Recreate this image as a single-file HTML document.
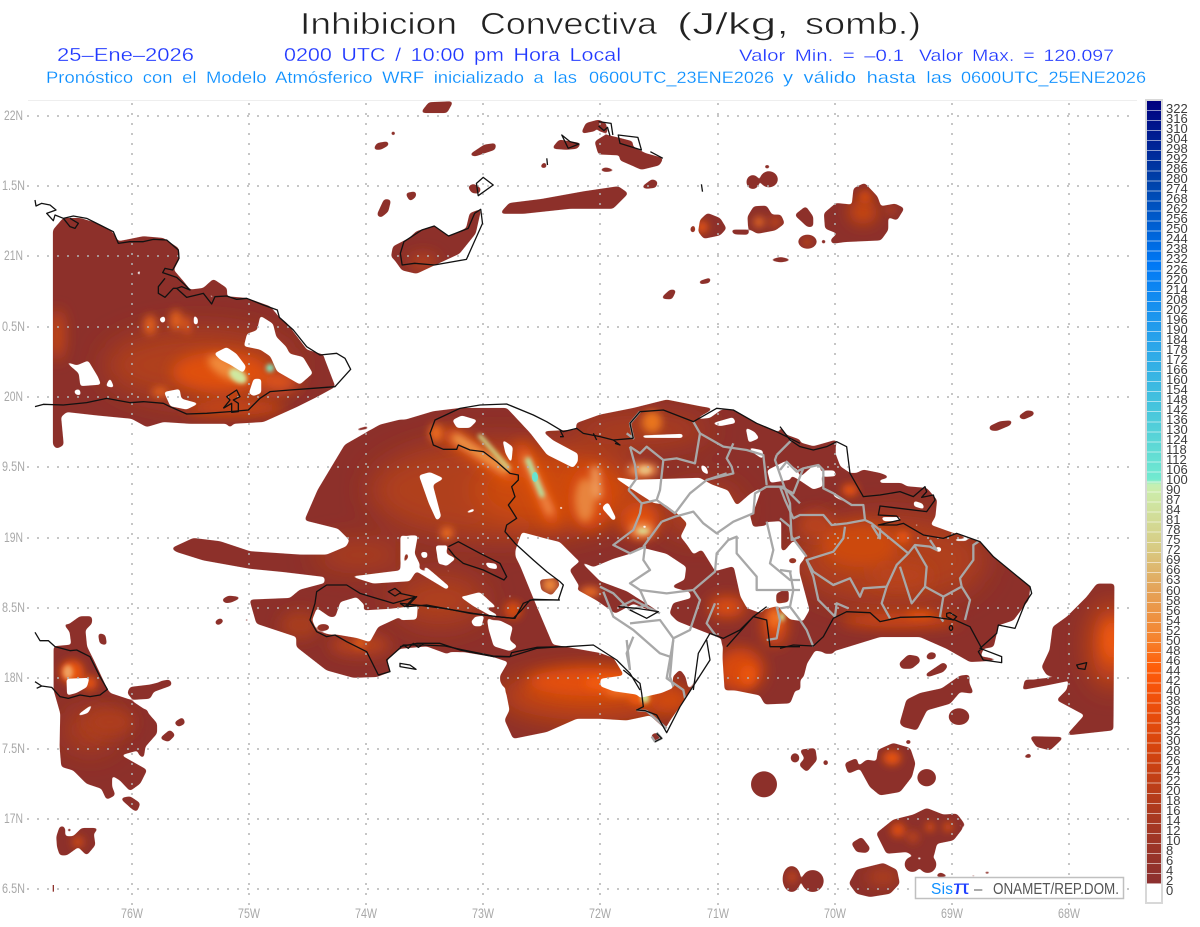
<!DOCTYPE html>
<html lang="es"><head><meta charset="utf-8"><title>Inhibicion Convectiva</title>
<style>
html,body{margin:0;padding:0;background:#fff;width:1200px;height:927px;overflow:hidden;font-family:"Liberation Sans",sans-serif}
svg{position:absolute;left:0;top:0}
.t{white-space:pre;font-family:"Liberation Sans",sans-serif}
.ax{font-size:13.5px;fill:#a8a8a8}
.ln path,.ln ellipse{fill:none;vector-effect:non-scaling-stroke;stroke-linejoin:round}
#bar{position:absolute;left:1145px;top:99px;width:18px;height:805px;box-sizing:border-box;border:2px solid #d8d8d8;background:#fff}
#cells{position:absolute;left:0;top:0;width:100%;height:783px;
background:repeating-linear-gradient(to bottom,transparent 0,transparent 9.04px,rgba(255,255,255,.55) 9.04px,rgba(255,255,255,.55) 10.04px),
linear-gradient(to bottom,#00007f 0%,#0042aa 10.4%,#0078f5 20.8%,#2aa5ea 31%,#45c4dd 39%,#72ead0 48.3%,#c4f0b4 49%,#ccecaa 49.8%,#d8cc84 57%,#e4a45a 62.3%,#f58530 68.5%,#ff5f0a 72.2%,#f8540a 74.5%,#d4440f 83%,#ab3a20 91%,#8c3030 100%)}
#lab{position:absolute;left:1166px;top:104px;font-size:13px;line-height:10.03px;color:#3c3c3c;white-space:pre}
</style></head><body>
<svg width="1200" height="927" viewBox="0 0 1200 927" xmlns="http://www.w3.org/2000/svg">
<defs>
<filter id="b2" x="-100%" y="-100%" width="300%" height="300%"><feGaussianBlur stdDeviation="2"/></filter>
<filter id="b4" x="-100%" y="-100%" width="300%" height="300%"><feGaussianBlur stdDeviation="4"/></filter>
<filter id="b7" x="-100%" y="-100%" width="300%" height="300%"><feGaussianBlur stdDeviation="7"/></filter>
<filter id="b14" x="-100%" y="-100%" width="300%" height="300%"><feGaussianBlur stdDeviation="14"/></filter>
<filter id="sm" filterUnits="userSpaceOnUse" x="0" y="0" width="1200" height="927" color-interpolation-filters="sRGB"><feGaussianBlur stdDeviation="1.7"/><feComponentTransfer><feFuncR type="linear" slope="8" intercept="-2.7"/><feFuncG type="linear" slope="8" intercept="-2.7"/><feFuncB type="linear" slope="8" intercept="-2.7"/></feComponentTransfer></filter>
<mask id="m" maskUnits="userSpaceOnUse" x="0" y="0" width="1200" height="927">
<g filter="url(#sm)">
<rect width="1200" height="927" fill="#000"/>
<g fill="#fff">
<g transform="translate(30 190) scale(.33333)"><polygon points="70,120 100,85 150,85 200,100 245,125 265,155 340,140 400,145 445,175 448,205 430,240 460,275 480,300 520,295 550,268 590,295 590,320 650,325 720,350 745,380 770,400 830,480 880,495 885,510 915,590 860,620 800,650 700,695 610,700 600,712 590,700 480,700 400,695 350,710 305,685 200,675 110,665 92,680 100,765 80,775 70,765"/><polygon points="975,718 1015,708 1015,715 985,722"/></g>
<polygon points="305,520 318,490 330,470 345,445 380,425 400,420 440,420 440,560 350,555 350,540 338,528"/>
<g transform="translate(160 520) scale(.33333)"><polygon points="35,85 100,55 180,65 270,95 420,105 500,105 560,80 570,60 535,25 435,0 1200,0 1200,570 1050,570 1040,520 1020,480 1060,430 1000,410 910,395 860,400 800,378 720,385 680,420 690,455 650,470 580,472 500,450 410,380 410,350 290,310 270,240 390,235 420,210 495,190 495,170 370,155 270,145 130,120 50,95"/></g>
<g transform="translate(400 390) scale(.33333)"><polygon points="0,95 100,65 180,55 320,55 390,130 440,195 520,235 535,215 535,190 460,150 430,125 530,120 530,100 600,75 700,55 800,30 900,50 960,60 1000,60 1070,100 1130,125 1200,150 1200,900 975,900 965,745 700,640 460,770 400,640 0,640"/></g>
<g transform="translate(780 390) scale(.33333)"><polygon points="0,110 30,150 100,170 170,150 165,175 210,250 230,250 250,240 300,250 340,265 380,290 440,295 470,330 465,380 450,405 520,430 600,455 650,510 750,590 755,600 745,630 700,690 655,705 640,770 610,775 600,800 665,810 570,815 500,775 420,740 300,740 170,780 130,785 105,780 80,820 70,860 40,885 0,900"/></g>
</g>
<g fill="#000">
<g transform="translate(30 190) scale(.33333)">
<polygon points="690,375 730,400 740,440 770,470 780,490 820,500 850,550 810,585 740,545 720,500 690,480 640,470 650,430 680,420"/>
<polygon points="550,490 590,470 620,490 650,530 640,550 600,525 570,510"/>
<polygon points="655,610 670,565 695,565 695,610 670,620"/>
<polygon points="400,605 450,595 455,625 510,640 470,660 420,650"/>
<polygon points="100,510 140,525 175,510 205,560 215,585 150,590 145,550 110,520"/>
<polygon points="225,590 240,560 255,595"/><polygon points="130,600 150,595 155,618 135,615"/>
<polygon points="385,385 405,375 408,395 395,402"/><polygon points="490,370 505,385 505,405 490,405"/>
<polygon points="230,275 255,265 245,280"/><polygon points="300,260 340,232 330,250 345,275 320,250"/>
<polygon points="530,305 555,320 545,328"/><polygon points="510,545 535,545 535,552 510,552"/>
<polygon points="275,595 290,605 285,612"/><polygon points="880,500 915,490 960,530 915,590"/>
</g>
<g transform="translate(160 520) scale(.33333)">
<polygon points="500,172 600,165 720,150 745,110 735,85 745,45 775,45 765,100 782,135 750,185 640,192 570,170"/>
<polygon points="540,245 590,230 615,255 610,270 690,265 775,255 772,295 720,292 655,322 630,368 590,355 530,345 510,345 470,335 455,300 470,262 510,290 525,290"/>
<polygon points="785,140 800,140 870,200 860,210"/>
<polygon points="895,228 935,225 975,262 1015,285 1005,295 940,260"/>
<polygon points="940,290 975,285 965,320 945,320"/>
<polygon points="980,300 1020,300 1060,320 1050,360 1075,380 1050,395 1000,380 985,330"/>
<polygon points="1045,220 1055,220 1050,245"/>
<polygon points="785,95 800,95 805,115 790,112"/>
<polygon points="830,110 850,80 865,70 860,100 890,115 860,140 835,130"/>
<polygon points="970,125 1010,130 1015,150 985,145"/>
<polygon points="865,395 900,395 895,402 870,402"/>
</g>
<g transform="translate(400 390) scale(.33333)">
<polygon points="345,480 365,425 440,445 480,455 535,510 580,530 640,505 690,490 720,470 800,490 860,530 855,570 815,590 870,605 875,625 820,640 810,670 870,730 880,745 820,745 790,690 775,665 680,605 600,575 540,515 510,540 540,590 530,597 590,630 640,665 690,705 780,745 820,755 880,760 925,735 960,745 970,770 965,900 300,900 460,770 405,640 360,530 345,500"/>
<polygon points="635,258 700,268 900,262 935,282 985,300 1010,345 1050,310 1075,295 1085,300 1060,370 1100,395 1145,392 1145,480 1175,490 1200,470 1200,640 1140,650 1100,660 1080,670 1040,655 1020,620 1000,530 945,545 905,480 880,495 860,465 840,440 860,400 835,375 795,345 760,340 690,295"/>
<polygon points="55,255 90,245 135,265 100,285 125,380 110,395 85,340"/>
<polygon points="195,365 225,352 225,365 200,372"/>
<polygon points="155,90 185,75 235,90 210,115 170,115"/>
<polygon points="305,145 340,170 335,225 315,190"/>
<polygon points="475,348 490,348 490,360 478,360"/>
<polygon points="610,345 625,335 650,385 640,395 605,355"/>
<polygon points="720,405 745,405 735,420"/>
<polygon points="720,135 850,130 850,145 730,145"/>
<polygon points="1035,110 1065,125 1080,145 1045,160"/>
<polygon points="1040,170 1090,180 1090,210 1060,190"/>
<polygon points="1100,240 1160,210 1175,270 1110,280"/>
<polygon points="880,90 940,55 965,60 930,85"/>
<polygon points="930,100 1000,80 1010,100 960,110"/>
<polygon points="900,220 920,230 930,260 905,245"/>
<polygon points="0,435 55,440 20,480 0,560"/>
<polygon points="60,485 85,485 80,505 65,505"/>
<polygon points="105,465 135,465 145,520 115,525"/>
<polygon points="120,535 155,540 150,550"/>
<polygon points="50,530 150,590 140,600 40,540"/>
<polygon points="200,615 240,605 295,655 240,650"/>
<polygon points="210,690 240,685 250,710 220,710"/>
<polygon points="260,680 310,710 330,770 280,750"/>
<polygon points="325,610 335,610 333,630 326,628"/>
<polygon points="0,680 50,665 50,690 0,692"/>
</g>
<g transform="translate(780 390) scale(.33333)">
<polygon points="20,215 55,240 60,260 100,225 120,225 130,290 100,300 55,270 20,250"/>
<polygon points="170,160 205,180 210,250 180,230 165,190"/>
<polygon points="125,240 165,240 170,260 130,262"/>
<polygon points="155,300 210,345 195,340 160,320"/>
<polygon points="295,270 340,258 365,280 300,280"/>
<polygon points="400,330 430,340 435,360 400,350"/>
<polygon points="300,380 365,380 360,395 310,395"/>
<polygon points="400,400 420,400 410,415"/>
<polygon points="520,445 570,445 560,455 525,455"/>
<polygon points="550,485 565,490 555,497"/><polygon points="570,510 582,515 578,525"/>
<polygon points="465,470 485,470 485,488 465,485"/>
<polygon points="0,490 5,490 40,450 80,490 72,510 55,530 90,660 70,695 30,690 0,660"/>
<polygon points="750,590 760,590 760,640 720,700 700,690 745,630"/>
</g>
<g transform="translate(370 100) scale(.35714 .33333)"><polygon points="125,440 145,425 135,450"/><polygon points="115,465 160,468 120,472"/><polygon points="680,145 700,140 690,148"/><polygon points="750,178 775,178 760,182"/></g>
</g>
<g fill="#fff">
<g transform="translate(480 640) scale(.33333)"><polygon points="60,110 95,50 160,40 220,15 360,40 400,55 430,105 360,115 360,140 400,155 470,165 480,175 545,160 580,145 580,110 600,90 615,110 625,150 690,60 700,50 605,190 570,240 555,265 510,225 440,240 360,235 290,235 200,275 100,295 75,240 90,210 80,150"/><ellipse cx="527" cy="290" rx="12" ry="10"/><ellipse cx="945" cy="353" rx="12" ry="13"/></g>
<polygon points="725,680 780,680 795,690 790,703 765,704 760,695 735,690"/>
<g transform="translate(160 520) scale(.33333)"><ellipse cx="490" cy="322" rx="18" ry="9"/><polygon points="185,240 205,228 245,232 210,248"/><polygon points="165,305 180,295 190,305 175,315"/><polygon points="0,485 25,480 33,492 0,505"/><ellipse cx="260" cy="300" rx="5" ry="5"/></g>
<g transform="translate(400 390) scale(.33333)"><polygon points="1130,610 1165,600 1165,635 1130,640"/><polygon points="1090,660 1130,650 1145,700 1180,690 1200,740 1130,760 1100,700"/><polygon points="1050,370 1090,370 1100,405 1060,410"/><polygon points="420,570 470,565 478,585 455,615 425,600"/></g>
<g transform="translate(780 390) scale(.33333)"><ellipse cx="12" cy="612" rx="12" ry="10"/><ellipse cx="38" cy="512" rx="12" ry="7"/><polygon points="628,110 660,95 697,92 690,105 650,122 630,120"/><polygon points="715,80 740,62 762,65 760,75 730,88"/><polygon points="358,820 385,795 415,800 420,815 395,835 365,835"/><polygon points="438,800 450,787 468,790 465,805 445,808"/><polygon points="435,855 490,818 503,828 490,845 445,860"/><polygon points="480,900 540,858 568,855 565,900"/><polygon points="720,900 770,868 860,860 865,872 800,885"/><polygon points="130,790 150,760 165,770 160,790"/></g>
<polygon points="1114,584 1097,584 1087,597 1067,617 1053,627 1050,650 1042,667 1047,675 1070,677 1067,690 1057,700 1085,715 1067,735 1113,730"/>
<g transform="translate(760 680) scale(.33333)">
<polygon points="420,130 440,60 480,40 550,25 600,0 625,5 640,40 600,35 570,70 500,90 470,150 430,140"/><ellipse cx="597" cy="110" rx="30" ry="24"/>
<polygon points="0,0 120,0 95,40 80,65 15,72 0,40"/><ellipse cx="12" cy="313" rx="38" ry="38"/><ellipse cx="105" cy="235" rx="12" ry="12"/><polygon points="120,210 165,205 170,240 140,275 118,255 135,235"/><ellipse cx="197" cy="248" rx="7" ry="8"/>
<polygon points="255,250 290,235 295,260 320,240 350,245 355,210 400,190 450,205 465,250 455,290 420,335 360,345 330,320 300,265 265,280"/><ellipse cx="500" cy="293" rx="27" ry="25"/><ellipse cx="445" cy="186" rx="8" ry="6"/>
<polygon points="810,170 910,172 870,210 830,200"/><polygon points="785,208 805,207 800,215"/><polygon points="785,232 810,220 815,233"/><polygon points="795,0 880,0 830,15 790,28"/>
<polygon points="350,460 400,420 460,405 500,385 550,405 590,402 615,435 580,480 530,490 520,530 465,530 440,515 380,520"/>
<polygon points="275,490 305,472 330,505 320,518 290,515"/><ellipse cx="457" cy="553" rx="22" ry="22"/><ellipse cx="503" cy="553" rx="25" ry="25"/><ellipse cx="95" cy="597" rx="26" ry="38"/><ellipse cx="158" cy="603" rx="32" ry="32"/>
<polygon points="268,610 290,570 370,550 410,570 418,610 390,640 330,650 290,640"/><polygon points="525,590 540,578 570,590"/><polygon points="625,590 640,583 655,590"/><polygon points="668,575 698,575 680,583"/>
</g>
<g transform="translate(370 100) scale(.35714 .33333)">
<polygon points="143,38 165,8 232,5 215,38"/><polygon points="10,148 20,130 50,125 52,135 30,148"/><polygon points="278,165 320,135 352,130 350,148 295,168"/><ellipse cx="65" cy="100" rx="6" ry="6"/>
<polygon points="60,470 65,440 110,415 130,395 180,378 220,410 270,385 280,340 310,328 295,400 250,460 180,495 130,520 90,510 70,480"/>
<polygon points="20,345 40,298 58,300 50,335 30,352"/><polygon points="100,280 128,275 128,290 112,303"/><polygon points="275,260 290,252 310,265 305,280 285,278"/><polygon points="365,340 390,310 480,298 600,275 695,260 722,280 680,325 560,325 430,340"/>
<polygon points="592,100 605,70 640,60 660,70 665,100 640,92 632,75 632,92"/><polygon points="630,125 660,105 700,115 735,125 735,140 770,160 820,175 810,195 760,208 700,180 700,165 640,162"/>
<polygon points="510,145 530,120 590,130 580,145 550,148"/><polygon points="478,198 490,185 495,203 478,203"/><polygon points="640,210 660,203 692,212 660,215"/><polygon points="760,262 790,238 805,245 800,262 775,265"/>
<polygon points="920,395 925,360 945,340 980,355 997,385 980,405 935,415"/><polygon points="897,385 908,373 910,395 900,398"/><ellipse cx="1072" cy="246" rx="17" ry="20"/><ellipse cx="1117" cy="238" rx="24" ry="23"/>
<polygon points="1058,350 1075,320 1110,318 1125,345 1150,345 1160,370 1135,390 1085,400 1060,385"/><polygon points="1010,390 1060,390 1060,403 1020,402"/><polygon points="1190,345 1220,320 1240,350 1240,380 1225,380"/><ellipse cx="1225" cy="425" rx="25" ry="20"/><ellipse cx="1270" cy="425" rx="6" ry="6"/>
<polygon points="1272,340 1305,310 1350,315 1355,265 1385,250 1420,290 1430,320 1470,312 1495,325 1475,360 1450,350 1450,390 1430,420 1330,425 1295,430 1290,420 1310,400 1275,385"/>
<polygon points="1115,480 1150,472 1185,480 1150,486"/><polygon points="920,545 955,533 950,548 925,552"/><polygon points="815,595 840,570 857,570 845,597"/><ellipse cx="1112" cy="200" rx="8" ry="5"/>
</g>
<g transform="translate(30 600) scale(.33333)">
<polygon points="100,70 115,75 150,50 185,50 185,70 165,90 170,140 190,180 230,265 240,280 300,300 345,330 380,370 380,400 345,440 340,475 325,460 325,450 270,465 350,510 330,550 300,572 270,540 245,525 245,560 255,585 230,598 215,565 170,550 130,510 95,500 90,440 92,340 72,270 72,140 125,135 120,95"/>
<polygon points="205,100 225,105 230,135 210,130"/><polygon points="272,595 300,590 330,610 320,635 305,625"/><polygon points="293,280 300,262 360,255 420,240 425,255 370,275 360,295 310,298"/><polygon points="390,415 420,390 435,405 415,425"/><polygon points="433,368 458,352 465,370 445,380"/><polygon points="555,70 570,55 580,60 565,75"/><polygon points="575,0 600,0 590,10"/>
<polygon points="80,710 90,680 103,680 105,710 130,710 155,685 205,685 190,700 195,735 170,765 145,740 110,765 90,765 82,740"/><ellipse cx="118" cy="690" rx="6" ry="5"/><polygon points="330,335 352,328 352,340"/>
</g>
</g>
<g fill="#000"><g transform="translate(30 600) scale(.33333)"><polygon points="108,235 180,232 172,262 140,280 110,288"/><polygon points="140,345 195,305 175,340 145,350"/><polygon points="245,458 265,458 265,462 245,462"/></g><g transform="translate(760 680) scale(.33333)"><ellipse cx="600" cy="437" rx="8" ry="5"/></g></g>
</g>
</mask>
</defs>

<g mask="url(#m)">
<rect width="1200" height="927" fill="#8d302a"/>
<g filter="url(#b14)" fill="#b0401b">
<ellipse cx="200" cy="365" rx="95" ry="36"/><ellipse cx="500" cy="490" rx="130" ry="50"/><ellipse cx="560" cy="490" rx="85" ry="38" fill="#cc4810"/><ellipse cx="890" cy="560" rx="95" ry="45"/><ellipse cx="440" cy="600" rx="45" ry="25"/><ellipse cx="360" cy="555" rx="45" ry="10" fill="#bb4516"/><ellipse cx="700" cy="510" rx="40" ry="25"/><ellipse cx="90" cy="730" rx="25" ry="20"/><ellipse cx="590" cy="695" rx="90" ry="25" fill="#c8470f"/><ellipse cx="640" cy="430" rx="70" ry="15"/><ellipse cx="1112" cy="645" rx="20" ry="40" fill="#e0500c"/>
</g>
<g filter="url(#b7)">
<ellipse cx="220" cy="372" rx="48" ry="20" fill="#df500f"/><ellipse cx="57" cy="335" rx="7" ry="25" fill="#c94a14"/><ellipse cx="280" cy="382" rx="18" ry="8" fill="#e8581a"/><ellipse cx="235" cy="408" rx="50" ry="7" fill="#d04a10"/>
<ellipse cx="590" cy="497" rx="22" ry="32" fill="#d84a10"/><ellipse cx="640" cy="520" rx="20" ry="18" fill="#df500f"/>
<ellipse cx="590" cy="682" rx="62" ry="14" fill="#e4500c"/><ellipse cx="670" cy="700" rx="20" ry="13" fill="#d04a10"/><ellipse cx="740" cy="670" rx="24" ry="22" fill="#d84a10"/>
<ellipse cx="900" cy="620" rx="60" ry="7" fill="#d4480e"/><ellipse cx="860" cy="545" rx="38" ry="22" fill="#cc4a10"/><ellipse cx="900" cy="575" rx="30" ry="13" fill="#b8431a"/><ellipse cx="815" cy="525" rx="18" ry="14" fill="#b8431a"/>
<ellipse cx="727" cy="607" rx="18" ry="10" fill="#e0500f"/><ellipse cx="775" cy="625" rx="12" ry="20" fill="#e0500f"/><ellipse cx="863" cy="212" rx="14" ry="12" fill="#c8470f"/><ellipse cx="423" cy="262" rx="14" ry="8" fill="#b8431a"/>
<ellipse cx="1112" cy="640" rx="9" ry="20" fill="#f05a0a"/><ellipse cx="110" cy="722" rx="24" ry="14" fill="#ad3e1b"/><ellipse cx="360" cy="645" rx="30" ry="10" fill="#b8431a"/><ellipse cx="300" cy="625" rx="20" ry="14" fill="#a83c1c"/><ellipse cx="883" cy="877" rx="16" ry="8" fill="#b0401b"/>
<path d="M450 435L510 475" stroke="#e8540f" stroke-width="15" fill="none" stroke-linecap="round"/><path d="M522 450L552 518" stroke="#e8540f" stroke-width="14" fill="none" stroke-linecap="round"/>
</g>
<g filter="url(#b4)">
<ellipse cx="436" cy="433" rx="7" ry="9" fill="#ec6a1c"/><ellipse cx="447" cy="533" rx="6" ry="6" fill="#f07020"/><ellipse cx="150" cy="325" rx="6" ry="10" fill="#e0601a"/><ellipse cx="176" cy="320" rx="6" ry="10" fill="#e0601a"/><ellipse cx="187" cy="325" rx="4" ry="9" fill="#d8541a"/><ellipse cx="160" cy="392" rx="8" ry="5" fill="#e0601a"/><ellipse cx="226" cy="368" rx="20" ry="9" fill="#f08a3a" transform="rotate(30 226 368)"/>
<path d="M456 438L505 470" stroke="#f0a050" stroke-width="8" fill="none" stroke-linecap="round"/><path d="M526 458L550 512" stroke="#f09050" stroke-width="7" fill="none" stroke-linecap="round"/><path d="M595 470L598 495" stroke="#f0a060" stroke-width="8" fill="none" stroke-linecap="round"/><ellipse cx="585" cy="500" rx="10" ry="22" fill="#e8843c"/>
<ellipse cx="643" cy="470" rx="15" ry="7" fill="#f09050"/><ellipse cx="652" cy="422" rx="10" ry="11" fill="#e8741f"/><ellipse cx="642" cy="530" rx="12" ry="8" fill="#f09050"/><ellipse cx="360" cy="643" rx="5" ry="5" fill="#e8641a"/><ellipse cx="513" cy="610" rx="9" ry="9" fill="#d04a10"/><ellipse cx="550" cy="585" rx="8" ry="8" fill="#f08a3a"/><ellipse cx="590" cy="592" rx="10" ry="5" fill="#f07020"/>
<ellipse cx="610" cy="683" rx="26" ry="7" fill="#f05a10"/><ellipse cx="620" cy="692" rx="15" ry="4" fill="#f07020"/><ellipse cx="640" cy="697" rx="12" ry="8" fill="#ee5a10"/><ellipse cx="748" cy="675" rx="8" ry="10" fill="#e8540f"/>
<ellipse cx="903" cy="537" rx="7" ry="6" fill="#e8540f"/><ellipse cx="850" cy="490" rx="8" ry="6" fill="#e8540f"/><ellipse cx="920" cy="615" rx="14" ry="3" fill="#e8540f"/><ellipse cx="702" cy="227" rx="6" ry="6" fill="#e8540f"/><ellipse cx="759" cy="222" rx="5" ry="5" fill="#f07020"/><ellipse cx="775" cy="222" rx="6" ry="6" fill="#b8431a"/><ellipse cx="865" cy="197" rx="6" ry="7" fill="#d04a10"/><ellipse cx="807" cy="242" rx="5" ry="5" fill="#b8431a"/><ellipse cx="891" cy="210" rx="4" ry="4" fill="#b8431a"/>
<ellipse cx="892" cy="758" rx="9" ry="7" fill="#e8540f"/><ellipse cx="898" cy="830" rx="7" ry="7" fill="#e05010"/><ellipse cx="930" cy="827" rx="4" ry="4" fill="#f05a0a"/><ellipse cx="948" cy="827" rx="4" ry="4" fill="#f05a0a"/><ellipse cx="913" cy="837" rx="6" ry="6" fill="#b8431a"/><ellipse cx="792" cy="877" rx="5" ry="6" fill="#c0451a"/><ellipse cx="78" cy="842" rx="6" ry="6" fill="#c94a14"/><ellipse cx="72" cy="672" rx="12" ry="12" fill="#e8540f"/><ellipse cx="90" cy="683" rx="7" ry="7" fill="#e8540f"/>
<ellipse cx="775" cy="618" rx="7" ry="10" fill="#f07020"/>
</g>
<g filter="url(#b2)">
<ellipse cx="68" cy="672" rx="5" ry="7" fill="#f0a060"/><ellipse cx="238" cy="376" rx="10" ry="6" fill="#cfe8a0" transform="rotate(35 238 376)"/><ellipse cx="270" cy="368" rx="4" ry="4" fill="#80e8c0"/>
<path d="M480 436L508 468" stroke="#d0e090" stroke-width="4" fill="none" stroke-linecap="round"/><path d="M528 460L542 495" stroke="#b0e8a8" stroke-width="5" fill="none" stroke-linecap="round"/><ellipse cx="645" cy="698" rx="4" ry="5" fill="#c8f0a0"/><ellipse cx="782" cy="617" rx="2.5" ry="4" fill="#c8f0a0"/><ellipse cx="643" cy="531" rx="6" ry="3" fill="#d8d890"/><ellipse cx="645" cy="470" rx="6" ry="4" fill="#e8c080"/>
</g>
<ellipse cx="535" cy="477" rx="3" ry="5" fill="#68e4d0"/>
</g>

<path d="M28 100.5H1137" stroke="#eeeeee" stroke-width="1" fill="none"/>
<g stroke="#b4b4b4" stroke-width="1.5" stroke-dasharray="2 8" fill="none">
<path d="M27 116H1137M27 186H1137M27 256H1137M27 327H1137M27 397H1137M27 467H1137M27 538H1137M27 608H1137M27 678H1137M27 749H1137M27 819H1137M27 889H1137"/>
<path d="M132 103V905M249 103V905M366 103V905M483 103V905M600 103V905M718 103V905M835 103V905M952 103V905M1069 103V905"/>
</g>

<g class="ln" stroke="#a8a8a8" stroke-width="2.3">
<g transform="translate(400 390) scale(.33333)">
<path d="M690,170L720,190L740,170L790,210L830,205L885,220L900,130L970,170L1040,180L1090,195L1100,285"/>
<path d="M685,300L725,340L720,370L700,420L640,465L690,490L735,470L730,510L750,540L690,580L720,600L800,610L880,600L945,545L950,490L985,450L1010,440L1010,490L1070,560L1070,600L1130,600L1200,600"/>
<path d="M790,210L780,300L770,330L825,370L870,310L920,270L980,250"/>
<path d="M770,330L725,340M785,395L730,470M785,395L825,380L880,365L910,400L950,430L1000,395L1060,370L1065,310L1100,290L1150,290L1200,340"/>
<path d="M600,590L640,610L690,660L740,645L720,600M660,650L700,630L740,650L780,670"/>
<path d="M880,600L900,630L870,720L820,745L780,690L690,700M945,640L920,700L950,740M820,745L810,860L820,890"/>
<path d="M700,740L680,790L690,840M610,605L640,680L700,720L780,790L810,800M1130,650L1140,690L1130,745L1100,750"/>
<path d="M900,130L880,95M690,170L705,225L710,265L685,300M680,130L700,145L690,100L720,65"/>
<path d="M1000,160L980,205L995,230L1000,250L920,270M1130,195L1175,150M1130,195L1125,210L1170,340L1175,450L1200,440M1100,395L1120,480L1110,520L1170,570L1200,570"/>
</g>
<g transform="translate(780 390) scale(.33333)">
<path d="M0,290L15,330L40,385L60,375L130,375L155,405L200,400L255,390L275,400L385,490L350,525L320,590L250,595L240,620L210,565L160,585L100,545L80,510L160,485L190,445L195,410"/>
<path d="M0,385L30,410L35,440L80,500M80,510L100,560L115,630L165,680L170,640L205,655M320,590L305,640L330,685"/>
<path d="M385,490L405,465L450,470L470,480L450,450M405,470L440,530L435,590L395,640L360,530"/>
<path d="M435,590L490,620L480,680L490,695M490,620L545,590L570,630L555,690M545,590L540,565L580,510L580,465L595,455"/>
<path d="M300,415L300,445L275,405M255,390L250,345L215,345L160,310L130,295L130,240L115,225L70,235L50,245L20,215L0,240M70,235L40,310L0,290"/>
<path d="M30,545L40,600L30,650L60,690L80,720L100,770M0,540L35,545M0,655L30,650"/>
</g>
<g transform="translate(480 640) scale(.33333)">
<path d="M440,0L450,90M580,0L560,115L610,150L615,175M470,210L500,213L560,265M530,278L545,295L525,305L515,290"/>
</g>
</g>

<g class="ln" stroke="#111" stroke-width="1.3">
<g transform="translate(30 190) scale(.33333)">
<path d="M15,30L18,48L35,40L60,45L78,60L50,70L70,92L75,75L100,85L130,78L170,85L210,105L250,125L265,160L300,155L340,155L370,148L410,150L445,180L447,205L428,240L405,235L398,248L440,262L460,280L480,300L455,290L440,295L470,322L500,315L520,310L545,342L555,320L590,318L620,328L650,325L700,345L742,360L748,382L790,420L830,470L870,495L920,490L945,505L962,538L915,590L850,595L780,600L720,605L690,625L655,660L600,665L530,670L470,672L420,650L400,640L340,635L300,638L230,625L170,638L100,645L40,643L15,650"/>
<path d="M405,265L385,290L385,310L405,322L430,295L440,295M100,85L120,110L135,115L145,100L120,85"/>
<path d="M580,655L600,630L590,620L620,600L630,620L610,630L625,640L625,665L605,667L605,640L580,655"/>
</g>
<g transform="translate(400 390) scale(.33333)">
<path d="M700,145L640,150L600,140L550,130L530,115L490,125L440,95L400,75L320,42L240,45L180,55L105,90L90,130L100,165L130,178L170,178L175,165L210,180L250,185L290,215L330,250L355,255L355,270L335,290L345,320L325,345L350,385L320,405L315,425L345,460L400,510L440,545L480,575L490,585L475,630L400,628L370,640L345,685L290,680L220,670L130,655L50,645L0,640"/>
<path d="M0,770L50,760L120,760L180,780L280,800L330,800L335,788L410,772L500,770L580,765L650,810L690,850L720,900"/>
<path d="M145,470L175,455L240,490L300,520L320,560L312,570L250,540L190,520L165,500L145,475"/>
<path d="M700,145L690,100L720,65L790,60L880,95L950,55L1000,60L1070,100L1130,125L1200,160"/>
<path d="M0,610L45,620L15,650L0,640M655,650L710,655L775,665L740,685L690,660"/>
<path d="M1100,650L1060,680L1020,720L970,745L930,730L895,790L880,900"/>
<path d="M980,770L1060,680L1100,690L1110,770L1200,770"/>
<path d="M480,120L490,140L480,140M580,130L590,150M640,150L660,165L645,160"/>
</g>
<g transform="translate(160 520) scale(.33333)">
<path d="M1200,380L1130,385L1050,410L1000,408L910,390L855,378L790,375L730,375L680,420L690,455L655,465L620,395L560,365L525,345L500,350L470,335L450,300L465,250L470,215L500,195L560,195L600,220L650,235L700,250L770,230L740,260L800,255L870,268L930,280L1010,290L1060,295L1085,270L1110,240L1200,240"/>
<path d="M720,430L750,435L768,448L720,440ZM685,215L705,205L722,218L705,228Z"/>
<path d="M730,375L745,385L760,370L775,382L790,372"/>
</g>
<g transform="translate(780 390) scale(.33333)">
<path d="M0,110L30,150L60,170L100,180L140,170L170,155L200,170L210,250L250,320L300,315L360,305L400,320L435,290L440,305L425,322L460,315L465,330L440,365L300,348L295,375L350,378L360,390L295,405L350,405L370,400L430,435L490,445L530,430L600,455L640,500L750,590L755,610L735,640L705,715L655,705L650,730L600,775L665,800L665,818L610,810L595,785L605,775L570,710L525,690L450,680L360,682L300,695L270,668L200,665L160,685L130,740L100,768L40,765L0,775"/>
<path d="M500,670L510,668L530,680L520,690L500,680ZM890,825L920,818L915,838L895,835Z"/>
<ellipse cx="513" cy="714" rx="5" ry="7"/>
</g>
<g transform="translate(480 640) scale(.33333)">
<path d="M430,90L480,130L485,160L490,200L470,210L495,212L530,225L560,278L600,200L690,60L680,0M530,280L545,295L525,305"/>
</g>
<g transform="translate(370 100) scale(.35714 .33333)">
<path d="M85,460L95,425L145,390L180,378L220,408L275,385L293,340L310,328L315,370L270,478L180,495L125,490L90,495Z"/>
<path d="M298,250L317,232L345,255L303,287ZM640,65L675,70L680,105M640,78L655,92L665,82L672,108M695,105L750,112L760,150L700,130ZM785,155L820,175M537,105L555,145L585,132L560,125ZM495,175L497,195M928,253L931,275"/>
</g>
<g transform="translate(30 600) scale(.33333)">
<path d="M15,97L30,122L55,122L75,140L120,152L140,150L180,170L210,230L232,268L210,285L180,290L150,285L115,295L90,290L65,262L35,258L15,245M35,258L20,265"/>
<path d="M70,855L70,875" stroke="#8d302a"/>
</g>
</g>

<g fill="#222" stroke="#fff" stroke-width=".6" font-size="31">
<text class="t" x="300" y="34" textLength="157" lengthAdjust="spacingAndGlyphs">Inhibicion</text>
<text class="t" x="480" y="34" textLength="177" lengthAdjust="spacingAndGlyphs">Convectiva</text>
<text class="t" x="677" y="34" textLength="112" lengthAdjust="spacingAndGlyphs">(J/kg,</text>
<text class="t" x="805" y="34" textLength="116" lengthAdjust="spacingAndGlyphs">somb.)</text>
</g>
<g fill="#2038ff" stroke="#fff" stroke-width=".25" style="word-spacing:3px">
<text class="t" x="57" y="61" font-size="18" textLength="137" lengthAdjust="spacingAndGlyphs">25–Ene–2026</text>
<text class="t" x="284" y="61" font-size="18" textLength="337" lengthAdjust="spacingAndGlyphs">0200 UTC / 10:00 pm Hora Local</text>
<text class="t" x="739" y="61" font-size="16.5" textLength="165" lengthAdjust="spacingAndGlyphs">Valor Min. = –0.1</text>
<text class="t" x="919" y="61" font-size="16.5" textLength="195" lengthAdjust="spacingAndGlyphs">Valor Max. = 120.097</text>
</g>
<g fill="#0a8eff" stroke="#fff" stroke-width=".2" font-size="16.5" style="word-spacing:4px">
<text class="t" x="46" y="83" textLength="531" lengthAdjust="spacingAndGlyphs">Pronóstico con el Modelo Atmósferico WRF inicializado a las</text>
<text class="t" x="589" y="83" textLength="185" lengthAdjust="spacingAndGlyphs">0600UTC_23ENE2026</text>
<text class="t" x="783" y="83" textLength="169" lengthAdjust="spacingAndGlyphs">y válido hasta las</text>
<text class="t" x="961" y="83" textLength="185" lengthAdjust="spacingAndGlyphs">0600UTC_25ENE2026</text>
</g>

<g class="ax t">
<text x="4" y="120" textLength="19" lengthAdjust="spacingAndGlyphs">22N</text>
<text x="2" y="190" textLength="23" lengthAdjust="spacingAndGlyphs">1.5N</text>
<text x="4" y="260" textLength="19" lengthAdjust="spacingAndGlyphs">21N</text>
<text x="2" y="331" textLength="23" lengthAdjust="spacingAndGlyphs">0.5N</text>
<text x="4" y="401" textLength="19" lengthAdjust="spacingAndGlyphs">20N</text>
<text x="2" y="471" textLength="23" lengthAdjust="spacingAndGlyphs">9.5N</text>
<text x="4" y="542" textLength="19" lengthAdjust="spacingAndGlyphs">19N</text>
<text x="2" y="612" textLength="23" lengthAdjust="spacingAndGlyphs">8.5N</text>
<text x="4" y="682" textLength="19" lengthAdjust="spacingAndGlyphs">18N</text>
<text x="2" y="753" textLength="23" lengthAdjust="spacingAndGlyphs">7.5N</text>
<text x="4" y="823" textLength="19" lengthAdjust="spacingAndGlyphs">17N</text>
<text x="2" y="893" textLength="23" lengthAdjust="spacingAndGlyphs">6.5N</text>
<text x="121" y="918" textLength="22" lengthAdjust="spacingAndGlyphs">76W</text>
<text x="238" y="918" textLength="22" lengthAdjust="spacingAndGlyphs">75W</text>
<text x="355" y="918" textLength="22" lengthAdjust="spacingAndGlyphs">74W</text>
<text x="472" y="918" textLength="22" lengthAdjust="spacingAndGlyphs">73W</text>
<text x="589" y="918" textLength="22" lengthAdjust="spacingAndGlyphs">72W</text>
<text x="707" y="918" textLength="22" lengthAdjust="spacingAndGlyphs">71W</text>
<text x="824" y="918" textLength="22" lengthAdjust="spacingAndGlyphs">70W</text>
<text x="941" y="918" textLength="22" lengthAdjust="spacingAndGlyphs">69W</text>
<text x="1058" y="918" textLength="22" lengthAdjust="spacingAndGlyphs">68W</text>
</g>

<rect x="915.5" y="877.5" width="208" height="21" fill="#fff" stroke="#c0c0c0" stroke-width="1.5"/>
<text class="t" x="931" y="894" font-size="15.5" fill="#1090ff" textLength="22" lengthAdjust="spacing">Sis</text>
<text class="t" x="953" y="894" font-size="19" fill="#2040ff" textLength="17" lengthAdjust="spacingAndGlyphs">π</text>
<text class="t" x="974" y="894" font-size="15" fill="#555">–</text>
<text class="t" x="993" y="894" font-size="15.5" fill="#555" textLength="126" lengthAdjust="spacingAndGlyphs">ONAMET/REP.DOM.</text>
</svg>
<div id="bar"><div id="cells"></div></div>
<div id="lab">322
316
310
304
298
292
286
280
274
268
262
256
250
244
238
232
226
220
214
208
202
196
190
184
178
172
166
160
154
148
142
136
130
124
118
112
106
100
90
87
84
81
78
75
72
69
66
63
60
58
56
54
52
50
48
46
44
42
40
38
36
34
32
30
28
26
24
22
20
18
16
14
12
10
8
6
4
2
0</div>
</body></html>
